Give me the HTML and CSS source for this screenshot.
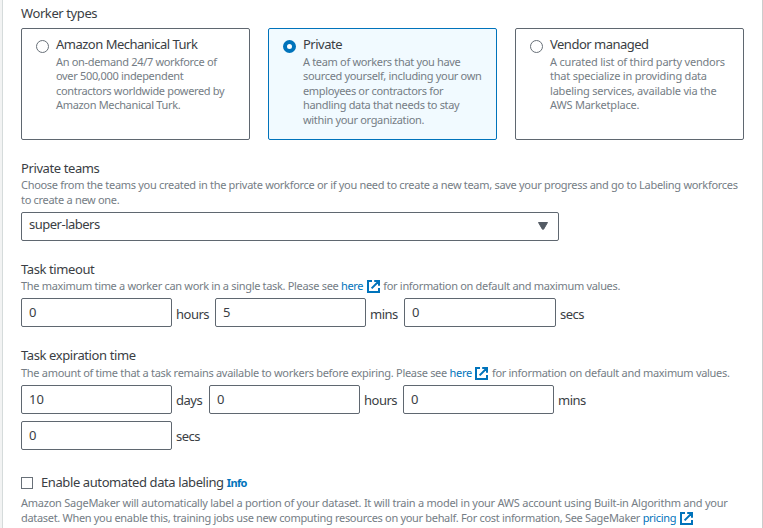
FILE: index.html
```html
<!DOCTYPE html>
<html lang="en">
<head>
<meta charset="utf-8">
<title>Workers</title>
<link rel="stylesheet" href="styles.css">
</head>
<body>
<svg class="defs" width="0" height="0"><symbol id="ext" viewBox="0 0 13 13"><path d="M5 1H1v11h11V8M7.2 1H12v4.8M12 1 4.6 8.4" fill="none" stroke="currentColor" stroke-width="2"/></symbol></svg>
<main class="panel">
  <section class="workers">
    <h2 class="label">Worker types</h2>
    <div class="cards">
      <label class="card"><span class="radio"></span><span class="body"><span class="title">Amazon Mechanical Turk</span><span class="desc">An on-demand 24/7 workforce of<br>over 500,000 independent<br>contractors worldwide powered by<br>Amazon Mechanical Turk.</span></span></label>
      <label class="card selected"><span class="radio"></span><span class="body"><span class="title">Private</span><span class="desc">A team of workers that you have<br>sourced yourself, including your own<br>employees or contractors for<br>handling data that needs to stay<br>within your organization.</span></span></label>
      <label class="card vendor"><span class="radio"></span><span class="body"><span class="title">Vendor managed</span><span class="desc">A curated list of third party vendors<br>that specialize in providing data<br>labeling services, available via the<br>AWS Marketplace.</span></span></label>
    </div>
  </section>
  <section class="teams">
    <h2 class="label">Private teams</h2>
    <p class="hint">Choose from the teams you created in the private workforce or if you need to create a new team, save your progress and go to Labeling workforces<br>to create a new one.</p>
    <div class="select"><span>super-labers</span><svg width="10" height="8" viewBox="0 0 10 8"><path d="M.5.5h9L5.6 7.2H4.4z" fill="#545b64" stroke="#545b64" stroke-linejoin="round"/></svg></div>
  </section>
  <section class="timeout">
    <h2 class="label">Task timeout</h2>
    <p class="hint">The maximum time a worker can work in a single task. Please see <a>here <svg class="ext"><use href="#ext"/></svg></a> for information on default and maximum values.</p>
    <div class="fields"><span class="input">0</span><span class="unit u-hours">hours</span><span class="input">5</span><span class="unit u-mins">mins</span><span class="input wide">0</span><span class="unit">secs</span></div>
  </section>
  <section class="expiration">
    <h2 class="label">Task expiration time</h2>
    <p class="hint">The amount of time that a task remains available to workers before expiring. Please see <a>here <svg class="ext"><use href="#ext"/></svg></a> for information on default and maximum values.</p>
    <div class="fields"><span class="input">10</span><span class="unit u-days">days</span><span class="input">0</span><span class="unit u-hours">hours</span><span class="input">0</span><span class="unit">mins</span></div>
    <div class="fields second"><span class="input">0</span><span class="unit">secs</span></div>
  </section>
  <section class="auto">
    <div class="check"><span class="box"></span><span class="label">Enable automated data labeling</span><a class="info">Info</a></div>
    <p class="hint">Amazon SageMaker will automatically label a portion of your dataset. It will train a model in your AWS account using Built-in Algorithm and your<br><span class="last">dataset. When you enable this, training jobs use new computing resources on your behalf. For cost information, See SageMaker <a>pricing <svg class="ext"><use href="#ext"/></svg></a></span></p>
  </section>
</main>
</body>
</html>
```
FILE: styles.css
```css
* { box-sizing: border-box; }
html { overflow: hidden; }
body { margin: 0; height: 528px; overflow: hidden; background: #f2f3f3; font-family: "Noto Sans", sans-serif; color: #16191f; }
.defs { position: absolute; }
.panel { height: 528px; margin-left: 2px; padding: 4px 0 0 18px; background: #fff; border-left: 1px solid #d5dbdb; border-right: 1px solid #ccc; white-space: nowrap; }
.label { margin: 0; font-size: 13px; font-weight: 400; line-height: 20px; color: #3a3e44; letter-spacing: -.4px; }
.workers { height: 154px; }
.workers .label { line-height: 19px; height: 19px; }
.cards { display: flex; gap: 18px; margin-top: 5px; }
.card { display: flex; width: 229px; height: 112px; padding: 8px 0 0 14px; border: 1px solid #5f6770; border-radius: 2px; }
.selected { background: #f1faff; border-color: #0073bb; }
.radio { flex: none; width: 13px; height: 13px; margin: 3px 7px 0 0; border: 1px solid #687078; border-radius: 50%; background: #fff; }
.selected .radio { border: 4px solid #0073bb; }
.body { display: flex; flex-direction: column; }
.title { height: 18px; font-size: 13px; line-height: 15px; color: #3a3e44; letter-spacing: -.5px; }
.desc { font-size: 11px; line-height: 14.4px; color: #757d85; letter-spacing: -.33px; }
.vendor .desc { letter-spacing: -.21px; }
.hint { height: 15px; margin: 0; font-size: 11px; line-height: 15px; color: #757d85; letter-spacing: -.3px; }
.hint a, .info { color: #0073bb; }
.ext { width: 13px; height: 13px; margin: 0 1px; vertical-align: -3px; overflow: visible; }
.teams { height: 101px; }
.teams .hint { height: 30px; margin-top: -1px; letter-spacing: -.3px; }
.select { display: flex; justify-content: space-between; align-items: center; width: 538px; height: 29px; margin-top: 5px; padding: 0 10px 0 7px; border: 1px solid #5f6770; border-radius: 2px; font-size: 13px; color: #3a3e44; letter-spacing: -.5px; }
.select span { margin-top: -5px; }
.select svg { margin-top: -1px; }
.timeout { height: 86px; }
.timeout .hint { margin-top: -1px; letter-spacing: -.32px; }
.timeout .fields { margin-top: 5px; }
.fields { display: flex; margin-top: 4px; }
.input { width: 151px; height: 29px; padding-left: 7px; border: 1px solid #5f6770; border-radius: 2px; font-size: 13px; line-height: 27px; color: #3a3e44; }
.wide { width: 152px; }
.unit { padding: 6px 0 0 4px; font-size: 13px; line-height: 20px; color: #3a3e44; letter-spacing: -.5px; }
.u-hours { width: 43px; }
.u-mins { width: 38px; }
.u-days { width: 37px; }
.expiration { height: 127px; }
.expiration .unit { padding-top: 5px; }
.expiration .hint + .fields { margin-top: 5px; }
.expiration .input { line-height: 26px; }
.second { margin-top: 7px; }
.check { display: flex; align-items: center; height: 20px; }
.check .label { line-height: 18px; }
.box { width: 12px; height: 12px; margin: 2px 8px 0 0; border: 1px solid #687078; }
.info { margin-left: 3px; font-size: 11px; font-weight: 700; letter-spacing: -.6px; }
.auto .hint { height: 30px; margin-top: 3px; letter-spacing: -.25px; }
.auto .last { letter-spacing: -.315px; }
```
